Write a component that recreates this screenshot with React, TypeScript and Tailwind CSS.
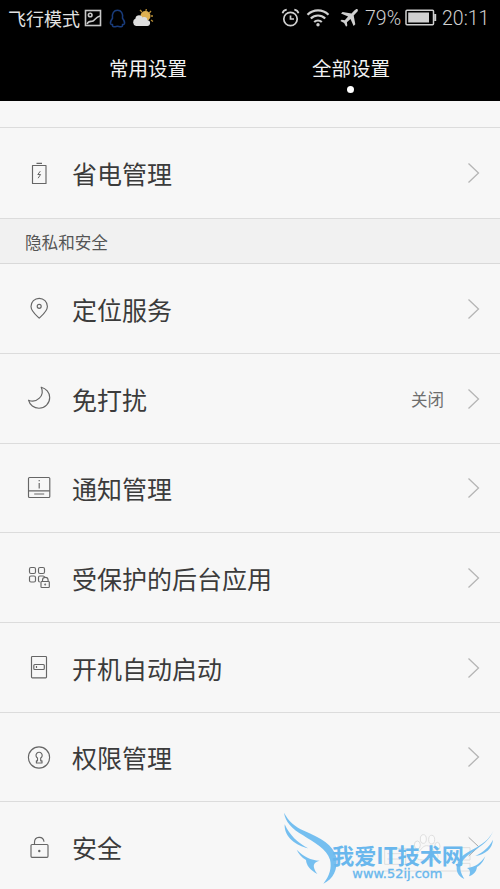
import type { ReactNode } from 'react';

function Icon({ children }: { children: ReactNode }) {
  return (
    <svg width="26" height="26" viewBox="0 0 26 26" fill="none" stroke="#666" strokeWidth="1.15" strokeLinejoin="round" className="mt-px shrink-0">
      {children}
    </svg>
  );
}

const icons = {
  power: (
    <Icon>
      <path d="M6.500 4.500h13.500v18H6.500zM10.500 2.300h5.500" />
      <path d="M14.300 10.200 11.800 13.500h2.800l-2.500 3.700" strokeWidth="1" />
    </Icon>
  ),
  pin: (
    <Icon>
      <path d="M13.200 22.200C9 18.200 5 15 5 10.500a8.200 8.200 0 0 1 16.400 0c0 4.500-4 7.700-8.200 11.700z" />
      <circle cx="13.200" cy="10.300" r="2" />
    </Icon>
  ),
  moon: (
    <Icon>
      <path d="M15.200 1.200c4.800 1.200 8.500 5.400 8.500 10.300 0 6-4.800 10.700-10.700 10.700-5 0-9.300-3.300-10.500-8 8 3.500 16.700-4.500 12.700-13z" />
    </Icon>
  ),
  notice: (
    <Icon>
      <rect x="2.500" y="1.500" width="21.300" height="20" rx="1" />
      <path d="M2.500 14.800h21.300M8.200 18h10M13.200 7v5.500M13.200 4v1.300" />
    </Icon>
  ),
  apps: (
    <Icon>
      <rect x="3.500" y="2.500" width="6" height="6" rx="1.500" />
      <rect x="12.500" y="2.500" width="6" height="6" rx="1.500" />
      <rect x="3.500" y="11" width="6" height="6" rx="1.500" />
      <path d="M18.500 12.200c-.2-.8-.7-1.200-1.400-1.200h-3.200c-.8 0-1.400.6-1.400 1.400v3.200c0 .8.500 1.400 1.300 1.400M16.500 16.500v-1.400a2.800 2.800 0 0 1 5.600 0v1.400" />
      <rect x="15" y="16.500" width="8.300" height="6" rx=".8" />
      <circle cx="19.200" cy="19.500" r=".4" />
    </Icon>
  ),
  boot: (
    <Icon>
      <rect x="5.500" y="1.500" width="15" height="21.300" rx=".8" />
      <rect x="7.800" y="9.500" width="10.500" height="5" rx="1" />
      <path d="M10.500 11v2" />
    </Icon>
  ),
  permission: (
    <Icon>
      <circle cx="13" cy="12.500" r="10.600" />
      <path d="M11.500 13a3.100 3.100 0 1 1 3.200 0v2.800h1.300V18h-5.600v-2.200h1.100z" />
    </Icon>
  ),
  lock: (
    <Icon>
      <rect x="5" y="9.500" width="17" height="12.800" rx="1" />
      <path d="M8.500 9.300v-2c0-6.200 8.800-6.600 9.500-.6" />
      <circle cx="13.300" cy="16" r=".6" fill="#666" />
    </Icon>
  ),
};

function Row({ icon, label, value, height }: { icon: ReactNode; label: string; value?: string; height: string }) {
  return (
    <div className={`flex shrink-0 items-center border-b border-[#dcdcdc] pl-[26px] pr-[20px] ${height}`}>
      {icon}
      <span className="ml-5 flex-1 text-[25px] leading-9 text-[#3b3b3b]">{label}</span>
      {value && <span className="mr-[23px] mt-px text-[16.500px] text-[#6e6e6e]">{value}</span>}
      <svg width="13" height="22" viewBox="0 0 13 22" fill="none" stroke="#b5b5b5" strokeWidth="1.300">
        <path d="m1.500 1.500 10 9.500-10 9.500" />
      </svg>
    </div>
  );
}

function StatusBar() {
  return (
    <div className="flex h-9 items-center pl-2 pr-[10px] text-[#d0d0d0]">
      <span className="w-[73px] whitespace-nowrap text-[18px] leading-9 text-[#e2e2e2]">飞行模式</span>
      <svg className="ml-[3px]" width="18" height="18" viewBox="0 0 18 18" fill="none" stroke="#c8c8c8" strokeWidth="1.600">
        <rect x="1.500" y="1.500" width="15" height="15" />
        <circle cx="6.200" cy="6" r="1.800" />
        <path d="M3 15c2-4 4-2 6-3s3-4 7-5" />
      </svg>
      <svg className="ml-[7px]" width="17" height="19" viewBox="0 0 17 19" fill="none" stroke="#193c7c" strokeWidth="1.500">
        <path d="M4 15.500c-1 .2-2.200-.2-2.500-1-.4-1.300.5-3.300 2-5.300-.8-5 1.500-8 5-8s5.800 3 5 8c1.500 2 2.400 4 2 5.300-.3.800-1.500 1.200-2.500 1 1 .8.800 2-.8 2.200-1.500.2-2.700-.5-3.700-.5s-2.200.7-3.700.5c-1.600-.2-1.800-1.400-.8-2.200z" />
      </svg>
      <svg className="ml-[6px]" width="22" height="20" viewBox="0 0 22 20">
        <path d="m10 4-2-2m6 1 .3-2m3 4 1.700-2M19 8h2m-2 4 2 1.500" stroke="#b98e35" strokeWidth="1.300" />
        <circle cx="13.500" cy="8" r="5" fill="#dfb050" />
        <path d="M4 18a4 4 0 0 1-.5-7.500C3.500 7 9 6 10.500 9.500c2.500-1.200 5 0 4.800 2.400 4 .4 3.500 6.100 0 6.100z" fill="#dedede" />
      </svg>
      <div className="flex-1" />
      <svg width="19" height="20" viewBox="0 0 19 20" fill="none" stroke="#d0d0d0" strokeWidth="1.700">
        <circle cx="9.500" cy="11" r="6.700" />
        <path d="M9.500 7.500V11H13M1.500 5.200C2 3.500 3.700 2 5.700 1.700M17.500 5.200C17 3.500 15.300 2 13.300 1.700" />
      </svg>
      <svg className="ml-[6px]" width="24" height="20" viewBox="0 0 24 20" fill="none" stroke="#d0d0d0" strokeWidth="2.200">
        <path d="M1.500 6.700c6-5.800 15-5.800 21 0M4.800 10.500c4.200-4 10.200-4 14.400 0M8.200 14c2.200-2 5.400-2 7.600 0" />
        <circle cx="12" cy="16.700" r="1.700" fill="#d0d0d0" stroke="none" />
      </svg>
      <svg className="ml-[9px] mr-px" width="20" height="20" viewBox="0 0 20 20" fill="#d0d0d0">
        <path d="M18.500 1.200c.8.800.4 2-1 3.400l-2.800 2.900 1.600 8.800-1.700 1.600-3.100-7-3.600 3.400.4 3.200-1.200 1.200-2-3.700-3.700-2 1.200-1.200 3.200.4 3.300-3.600L2 5.500 3.600 3.900l8.900 1.500 2.800-2.900c1.400-1.400 2.500-2 3.200-1.300z" />
      </svg>
      <span className="ml-[5px] w-[40px] pt-px font-[Roboto,sans-serif] text-[19.500px] font-light leading-9">79%</span>
      <svg width="32" height="18" viewBox="0 0 32 18" fill="none" stroke="#d0d0d0">
        <rect x="1" y="1.300" width="27.500" height="14.500" rx="1" strokeWidth="1.500" />
        <path d="M3.200 3.500H24v10H3.200z" fill="#d0d0d0" stroke="none" />
        <path d="M30.200 5v7" strokeWidth="2" />
      </svg>
      <span className="ml-[5px] w-[48px] pt-[2px] font-[Roboto,sans-serif] text-[19.500px] font-light leading-9">20:11</span>
    </div>
  );
}

function Watermark() {
  return (
    <svg className="absolute bottom-0 right-0" width="230" height="89" viewBox="0 0 690 267">
      <g fill="#fafafa" stroke="#dfdfdf" strokeWidth="3">
        <ellipse cx="442" cy="135" rx="9" ry="12" />
        <ellipse cx="460" cy="117" rx="9" ry="13" />
        <ellipse cx="485" cy="119" rx="9" ry="13" />
        <ellipse cx="502" cy="139" rx="8" ry="12" />
        <path d="M470 137c-14 0-18 17-30 24-11 17 12 22 30 17 20 5 43 0 31-17-12-7-15-24-31-24z" />
      </g>
      <g fill="none" stroke="#dedede" strokeWidth="3">
        <path d="M344 145h63v48h-63zM352 161h48M352 177h48M575 143h25v37h-25M565 190h35v23H340" />
      </g>
      <path d="m596 112 30 28-30 28" fill="none" stroke="#999" strokeWidth="2.500" />
      <g fill="#75bff0">
        <path d="M42 38c14 26 32 42 60 54 50 22 88 42 97 80 5 37-10 67-39 79 18-23 26-47 20-72-10-33-48-51-81-73C64 85 46 65 42 38z" />
        <path d="M44 73c15 33 38 54 70 72-34-8-72-32-70-72z" />
        <path d="M80 149c22 22 42 31 69 33-21 5-23 17-7 40-22-12-33-26-34-42-13-8-22-19-28-31z" />
        <path d="M671 91c-13 30-34 45-58 61-27 18-44 33-42 54 1 11 6 21 12 31-20-8-28-28-20-48 7-20 25-30 48-42 27-14 47-29 60-56z" />
        <path d="M669 119c-2 26-21 43-53 49 24-12 41-26 53-49z" />
        <path d="M646 169c-7 18-14 26-25 32-2 15-11 24-24 28 5-12 4-20-6-25 25-2 40-14 55-35z" />
      </g>
      <g fill="#69b7ed">
        <text x="186" y="193" textLength="396" lengthAdjust="spacingAndGlyphs" fontSize="66" fontWeight="700" fontFamily="'Noto Sans CJK SC', sans-serif">我爱IT技术网</text>
        <text x="247" y="234" textLength="270" lengthAdjust="spacingAndGlyphs" fontSize="36" stroke="#69b7ed" strokeWidth="1" fontFamily="'DejaVu Sans', sans-serif">www.52ij.com</text>
      </g>
    </svg>
  );
}

export default function App() {
  return (
    <main className="relative flex h-[889px] w-[500px] flex-col overflow-hidden bg-[#f7f7f7] font-['Noto_Sans_CJK_SC',sans-serif]">
      <header className="h-[101px] shrink-0 bg-black">
        <StatusBar />
        <nav className="flex justify-between pl-[109px] pr-[110px] pt-[14px] text-[19.500px] leading-9 text-[#f2f2f2]">
          <span>常用设置</span>
          <div className="flex flex-col items-center">
            <span>全部设置</span>
            <span className="size-[7px] rounded-full bg-white" />
          </div>
        </nav>
      </header>
      <div className="h-[27px] shrink-0 border-b border-[#dcdcdc]" />
      <Row icon={icons.power} label="省电管理" height="h-[91px]" />
      <div className="flex h-[45px] shrink-0 items-center border-b border-[#d9d9d9] bg-[#f1f1f1] pl-[25px] pt-[2px] text-[16.600px] text-[#555]">隐私和安全</div>
      <Row icon={icons.pin} label="定位服务" height="h-[90px]" />
      <Row icon={icons.moon} label="免打扰" value="关闭" height="h-[90px]" />
      <Row icon={icons.notice} label="通知管理" height="h-[89px]" />
      <Row icon={icons.apps} label="受保护的后台应用" height="h-[90px]" />
      <Row icon={icons.boot} label="开机自动启动" height="h-[90px]" />
      <Row icon={icons.permission} label="权限管理" height="h-[89px]" />
      <div className="flex h-[90px] shrink-0 items-center pl-[26px]">
        {icons.lock}
        <span className="ml-5 text-[25px] leading-9 text-[#3b3b3b]">安全</span>
      </div>
      <Watermark />
    </main>
  );
}
